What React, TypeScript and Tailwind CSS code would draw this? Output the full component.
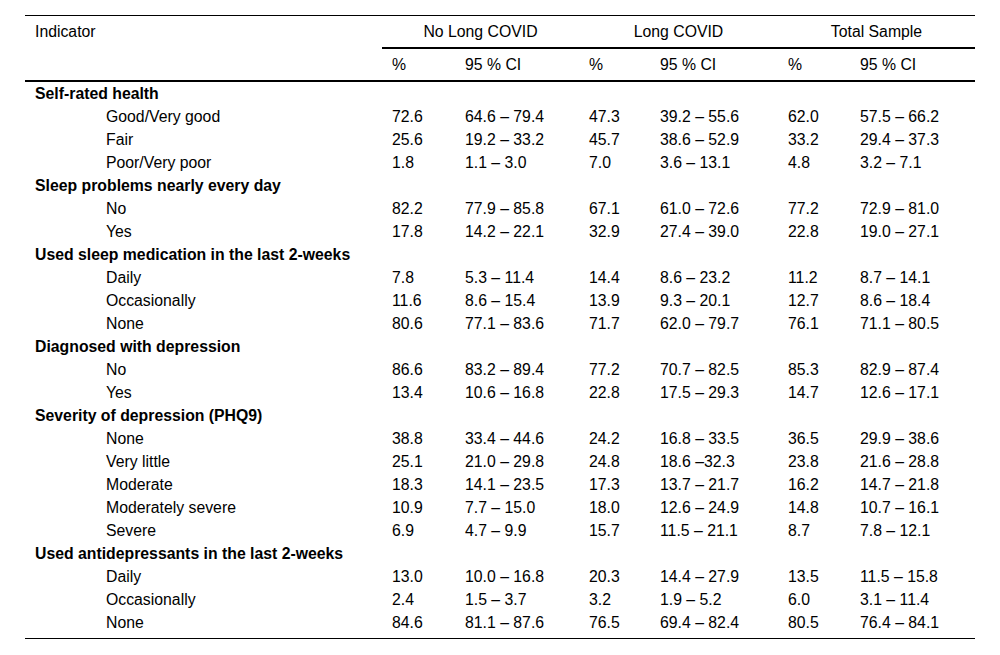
import React from "react";

type Row =
  | { kind: "group"; label: string }
  | { kind: "item"; label: string; v: [string, string, string, string, string, string] };

const rows: Row[] = [
  { kind: "group", label: "Self-rated health" },
  { kind: "item", label: "Good/Very good", v: ["72.6", "64.6 – 79.4", "47.3", "39.2 – 55.6", "62.0", "57.5 – 66.2"] },
  { kind: "item", label: "Fair", v: ["25.6", "19.2 – 33.2", "45.7", "38.6 – 52.9", "33.2", "29.4 – 37.3"] },
  { kind: "item", label: "Poor/Very poor", v: ["1.8", "1.1 – 3.0", "7.0", "3.6 – 13.1", "4.8", "3.2 – 7.1"] },
  { kind: "group", label: "Sleep problems nearly every day" },
  { kind: "item", label: "No", v: ["82.2", "77.9 – 85.8", "67.1", "61.0 – 72.6", "77.2", "72.9 – 81.0"] },
  { kind: "item", label: "Yes", v: ["17.8", "14.2 – 22.1", "32.9", "27.4 – 39.0", "22.8", "19.0 – 27.1"] },
  { kind: "group", label: "Used sleep medication in the last 2-weeks" },
  { kind: "item", label: "Daily", v: ["7.8", "5.3 – 11.4", "14.4", "8.6 – 23.2", "11.2", "8.7 – 14.1"] },
  { kind: "item", label: "Occasionally", v: ["11.6", "8.6 – 15.4", "13.9", "9.3 – 20.1", "12.7", "8.6 – 18.4"] },
  { kind: "item", label: "None", v: ["80.6", "77.1 – 83.6", "71.7", "62.0 – 79.7", "76.1", "71.1 – 80.5"] },
  { kind: "group", label: "Diagnosed with depression" },
  { kind: "item", label: "No", v: ["86.6", "83.2 – 89.4", "77.2", "70.7 – 82.5", "85.3", "82.9 – 87.4"] },
  { kind: "item", label: "Yes", v: ["13.4", "10.6 – 16.8", "22.8", "17.5 – 29.3", "14.7", "12.6 – 17.1"] },
  { kind: "group", label: "Severity of depression (PHQ9)" },
  { kind: "item", label: "None", v: ["38.8", "33.4 – 44.6", "24.2", "16.8 – 33.5", "36.5", "29.9 – 38.6"] },
  { kind: "item", label: "Very little", v: ["25.1", "21.0 – 29.8", "24.8", "18.6 –32.3", "23.8", "21.6 – 28.8"] },
  { kind: "item", label: "Moderate", v: ["18.3", "14.1 – 23.5", "17.3", "13.7 – 21.7", "16.2", "14.7 – 21.8"] },
  { kind: "item", label: "Moderately severe", v: ["10.9", "7.7 – 15.0", "18.0", "12.6 – 24.9", "14.8", "10.7 – 16.1"] },
  { kind: "item", label: "Severe", v: ["6.9", "4.7 – 9.9", "15.7", "11.5 – 21.1", "8.7", "7.8 – 12.1"] },
  { kind: "group", label: "Used antidepressants in the last 2-weeks" },
  { kind: "item", label: "Daily", v: ["13.0", "10.0 – 16.8", "20.3", "14.4 – 27.9", "13.5", "11.5 – 15.8"] },
  { kind: "item", label: "Occasionally", v: ["2.4", "1.5 – 3.7", "3.2", "1.9 – 5.2", "6.0", "3.1 – 11.4"] },
  { kind: "item", label: "None", v: ["84.6", "81.1 – 87.6", "76.5", "69.4 – 82.4", "80.5", "76.4 – 84.1"] },
];

const cols = "grid grid-cols-[357px_73px_124px_71px_128px_72px_125px]";

export default function App() {
  return (
    <div
      className="min-h-[655px] w-[1000px] bg-white pt-[15px] pl-[25px] text-[15.8px] text-black"
      style={{ fontFamily: '"Liberation Sans", Arial, sans-serif' }}
    >
      <div className="w-[950px] border-t border-black">
        {/* header row 1 */}
        <div className="grid h-[33px] grid-cols-[357px_197px_199px_197px]">
          <div className="flex items-center pl-[10px] pb-[2px]">Indicator</div>
          <div className="flex items-center justify-center border-b-2 border-black">No Long COVID</div>
          <div className="flex items-center justify-center border-b-2 border-black">Long COVID</div>
          <div className="flex items-center justify-center border-b-2 border-black">Total Sample</div>
        </div>
        {/* header row 2 */}
        <div className={`${cols} h-[33px] border-b-2 border-black`}>
          <div />
          {["%", "95 % CI", "%", "95 % CI", "%", "95 % CI"].map((t, i) => (
            <div key={i} className="flex items-center pl-[10px]">
              {t}
            </div>
          ))}
        </div>
        {/* body */}
        <div className="border-b border-black pb-[4px]">
          {rows.map((r, i) =>
            r.kind === "group" ? (
              <div key={i} className="flex h-[23px] items-center pl-[10px] font-bold">
                {r.label}
              </div>
            ) : (
              <div key={i} className={`${cols} h-[23px]`}>
                <div className="flex items-center pl-[81px]">{r.label}</div>
                {r.v.map((t, j) => (
                  <div key={j} className="flex items-center whitespace-nowrap pl-[10px]">
                    {t}
                  </div>
                ))}
              </div>
            )
          )}
        </div>
      </div>
    </div>
  );
}
